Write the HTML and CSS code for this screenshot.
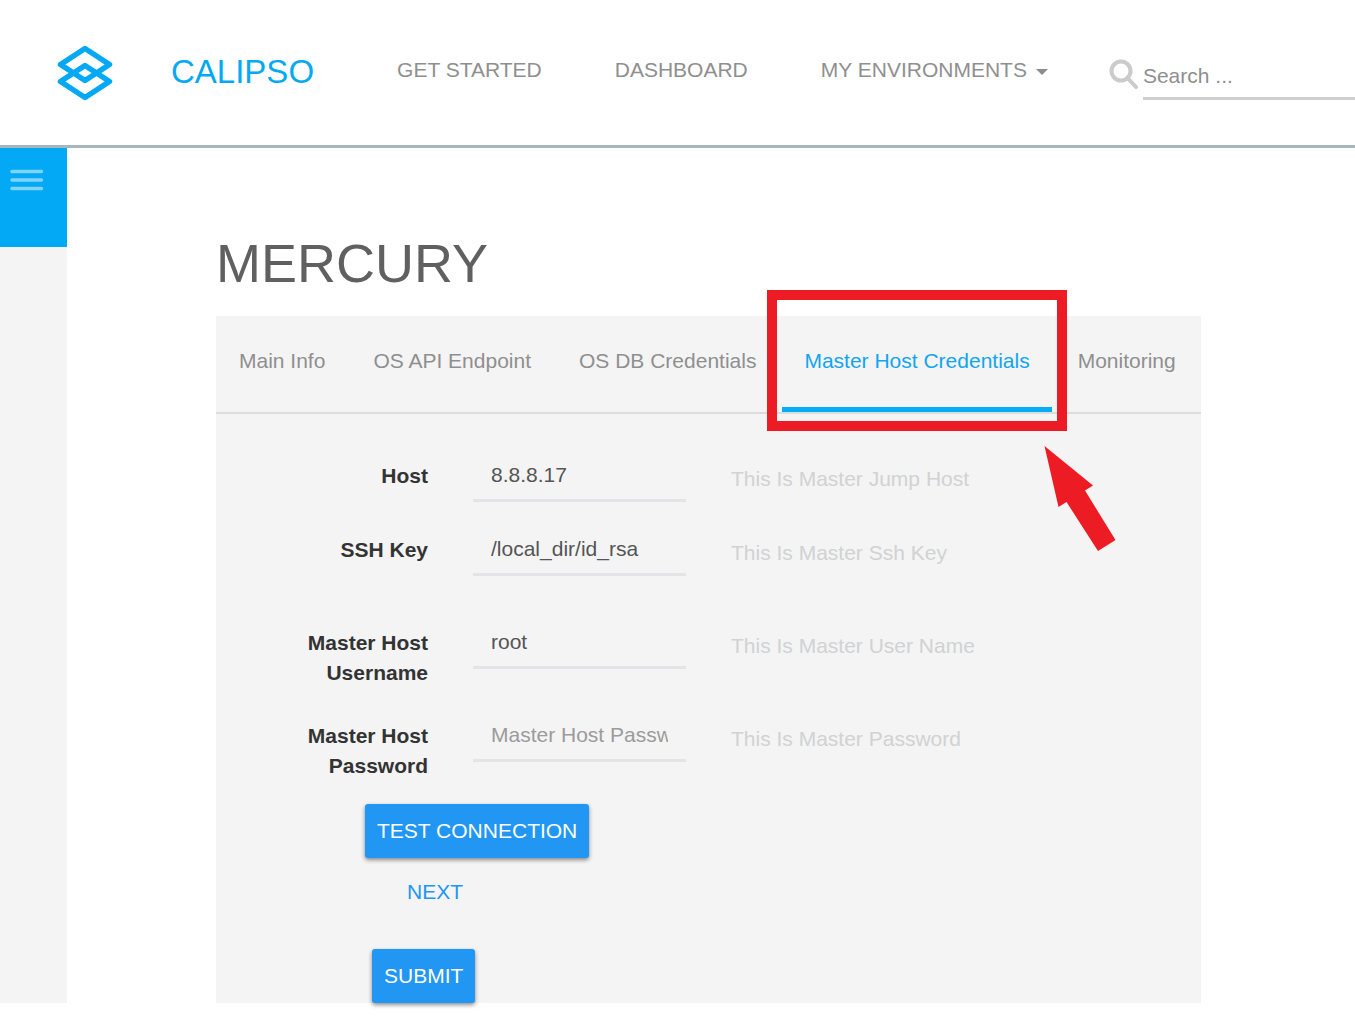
FILE: index.html
```html
<!DOCTYPE html>
<html lang="en">
<head>
  <meta charset="utf-8">
  <meta name="viewport" content="width=device-width, initial-scale=1">
  <title>Calipso</title>
  <link rel="stylesheet" href="styles.css">
</head>
<body>
  <header class="topbar">
    <a class="brand" href="#">
      <svg class="brand-logo" viewBox="0 0 56 56" aria-hidden="true">
        <g fill="none" stroke="#03a9f4" stroke-width="5.500" stroke-linejoin="round">
          <path d="M28 3.500L52.500 19.500L28 35.500L3.500 19.500Z"/>
          <path d="M28 20.500L52.500 36.500L28 52.500L3.500 36.500Z"/>
        </g>
      </svg>
      <span class="brand-name">CALIPSO</span>
    </a>
    <nav class="nav">
      <a class="nav-item" href="#">GET STARTED</a>
      <a class="nav-item" href="#">DASHBOARD</a>
      <button class="nav-item nav-menu" type="button">MY ENVIRONMENTS
        <svg class="caret" viewBox="0 0 12 6" aria-hidden="true"><path d="M0 0H12L6 6Z" fill="#8c8c8c"/></svg>
      </button>
    </nav>
    <form class="search">
      <svg class="search-icon" viewBox="0 0 30 30" aria-hidden="true">
        <g fill="none" stroke="#cbcbcb" stroke-width="4">
          <circle cx="12" cy="12" r="9.500"/>
          <path d="M18.500 19L27 28" stroke-linecap="round"/>
        </g>
      </svg>
      <input class="search-input" type="search" placeholder="Search ..." aria-label="Search">
    </form>
  </header>

  <div class="layout">
    <aside class="sidebar">
      <button class="menu-toggle" type="button" aria-label="Toggle menu">
        <svg class="menu-icon" viewBox="0 0 34 22" aria-hidden="true">
          <path d="M2 2.500H31.500M2 11H31.500M2 19.500H31.500" stroke="#80d4fa" stroke-width="3.500" stroke-linecap="round"/>
        </svg>
      </button>
    </aside>

    <main class="content">
      <h1 class="title">MERCURY</h1>
      <section class="card">
        <ul class="tabs">
          <li class="tab"><a class="tab-link" href="#">Main Info</a></li>
          <li class="tab"><a class="tab-link" href="#">OS API Endpoint</a></li>
          <li class="tab"><a class="tab-link" href="#">OS DB Credentials</a></li>
          <li class="tab tab-active">
            <a class="tab-link" href="#">Master Host Credentials</a>
            <span class="callout-box"></span>
            <svg class="callout-arrow" viewBox="0 0 72 106" aria-hidden="true">
              <path d="M0.500 0L49 39.500L41 44.500L71.500 94L54 105L22.500 56L14.500 61Z" fill="#ed1c24"/>
            </svg>
          </li>
          <li class="tab"><a class="tab-link" href="#">Monitoring</a></li>
        </ul>

        <form class="form">
          <div class="fields">
            <div class="field">
              <label class="label" for="host">Host</label>
              <input class="input" id="host" type="text" value="8.8.8.17">
              <p class="help">This Is Master Jump Host</p>
            </div>
            <div class="field field-tall">
              <label class="label" for="key">SSH Key</label>
              <input class="input" id="key" type="text" value="/local_dir/id_rsa">
              <p class="help">This Is Master Ssh Key</p>
            </div>
            <div class="field">
              <label class="label" for="user">Master Host<br>Username</label>
              <input class="input" id="user" type="text" value="root">
              <p class="help">This Is Master User Name</p>
            </div>
            <div class="field">
              <label class="label" for="password">Master Host<br>Password</label>
              <input class="input" id="password" type="password" placeholder="Master Host Password">
              <p class="help">This Is Master Password</p>
            </div>
          </div>
          <div class="actions">
            <button class="btn btn-test" type="button">TEST CONNECTION</button>
            <button class="btn btn-next" type="button">NEXT</button>
            <button class="btn btn-submit" type="submit">SUBMIT</button>
          </div>
        </form>
      </section>
    </main>
  </div>
</body>
</html>
```

FILE: styles.css
```css
* {
  box-sizing: border-box;
}

body {
  min-height: 100vh;
  margin: 0;
  background: #fff;
  color: #333;
  font: 21px/30px "Liberation Sans", Arial, sans-serif;
}

a {
  text-decoration: none;
}

button,
input {
  font: inherit;
  border: 0;
  border-radius: 0;
  background: none;
  margin: 0;
  padding: 0;
}

/* Top bar */

.topbar {
  display: flex;
  align-items: center;
  min-height: 148px;
  padding-left: 57px;
  border-bottom: 3px solid #a5b6be;
}

.brand {
  display: flex;
  align-items: center;
  gap: 58px;
  color: #03a9f4;
}

.brand-logo {
  width: 56px;
  height: 56px;
}

.brand-name {
  font-size: 33px;
  padding-bottom: 2px;
}

.nav {
  display: flex;
  gap: 73px;
  margin-left: 83px;
  padding-bottom: 6px;
}

.nav-item {
  color: #8f8f8f;
  white-space: nowrap;
}

.nav-menu {
  display: flex;
  align-items: center;
  gap: 9px;
}

.caret {
  width: 12px;
  height: 6px;
  margin-top: 4px;
}

.search {
  display: flex;
  flex: 1;
  gap: 4px;
  min-width: 0;
  margin: 14px 0 0 61px;
}

.search-icon {
  flex: none;
  width: 30px;
  height: 30px;
}

.search-input {
  flex: 1;
  min-width: 0;
  height: 41px;
  padding-bottom: 4px;
  border-bottom: 3px solid #cfcfcf;
  appearance: none;
  outline: 0;
}

.search-input::placeholder {
  color: #8f8f8f;
  opacity: 1;
}

/* Page body */

.layout {
  display: flex;
}

.sidebar {
  flex: none;
  width: 67px;
  background: #f4f4f4;
}

.menu-toggle {
  display: flex;
  width: 100%;
  height: 99px;
  padding: 21px 10px;
  background: #03a9f4;
}

.menu-icon {
  width: 34px;
  height: 22px;
}

.content {
  flex: 1;
  min-width: 0;
  padding: 85px 154px 0 149px;
}

.title {
  margin: 0 0 23px;
  color: #606060;
  font-size: 54px;
  font-weight: 400;
  line-height: 60px;
}

.card {
  background: #f4f4f4;
}

/* Tabs */

.tabs {
  display: flex;
  gap: 4px;
  margin: 0;
  padding: 0 0 0 1px;
  border-bottom: 2px solid #dcdcdc;
  list-style: none;
}

.tab {
  position: relative;
}

.tab-link {
  display: block;
  padding: 30px 22px 31px;
  border-bottom: 5px solid transparent;
  color: #8f8f8f;
  white-space: nowrap;
}

.tab-active .tab-link {
  border-bottom-color: #03aef6;
  color: #12a5f2;
}

.callout-box {
  position: absolute;
  z-index: 1;
  inset: -26px -15px -19px;
  border: 10px solid #ed1c24;
  pointer-events: none;
}

.callout-arrow {
  position: absolute;
  z-index: 1;
  top: 130px;
  right: -64px;
  width: 72px;
  height: 106px;
}

/* Form */

.form {
  padding-top: 46px;
}

.fields {
  display: flex;
  flex-direction: column;
  gap: 32px;
}

.field {
  display: grid;
  grid-template-columns: 212fr 213fr 470fr;
  column-gap: 45px;
  align-items: start;
}

.field-tall {
  min-height: 61px;
}

.label {
  padding-top: 1px;
  font-weight: 700;
  text-align: right;
}

.input {
  width: 100%;
  min-width: 0;
  height: 42px;
  padding: 0 18px 9px;
  border-bottom: 3px solid #e4e4e7;
  color: #555;
  outline: 0;
}

.input::placeholder {
  color: #9b9b9b;
  opacity: 1;
}

.help {
  margin: 0;
  padding-top: 4px;
  color: #d0d2d3;
}

.actions {
  display: flex;
  flex-direction: column;
  align-items: flex-start;
  margin-top: 23px;
}

.btn {
  height: 54px;
  padding: 0 12px;
  border-radius: 3px;
  background: #2196f3;
  box-shadow: 0 2px 4px rgba(0, 0, 0, 0.45);
  color: #fff;
  font-weight: 500;
}

.btn-test {
  margin-left: 149px;
}

.btn-next {
  margin: 7px 0 30px 179px;
  background: none;
  box-shadow: none;
  color: #2196f3;
}

.btn-submit {
  margin-left: 156px;
}
```
